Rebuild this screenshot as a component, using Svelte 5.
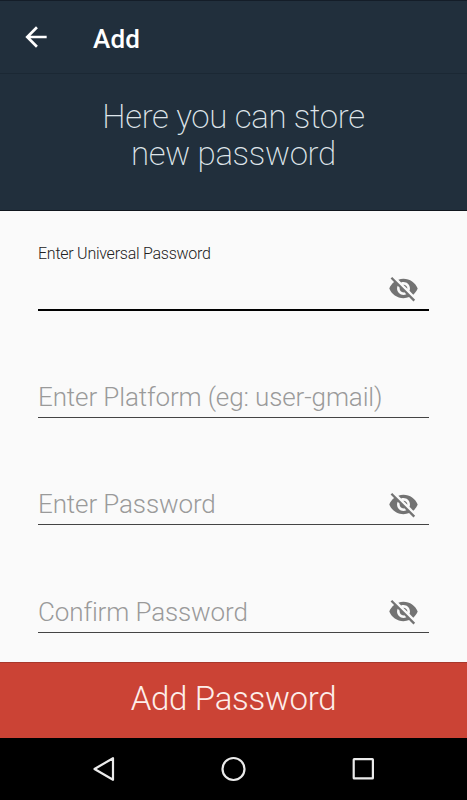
<script lang="ts">
  interface Field {
    id: string;
    label: string;
    type: "text" | "password";
    focused?: boolean;
  }

  const fields: Field[] = [
    {
      id: "universal",
      label: "Enter Universal Password",
      type: "password",
      focused: true,
    },
    { id: "platform", label: "Enter Platform (eg: user-gmail)", type: "text" },
    { id: "password", label: "Enter Password", type: "password" },
    { id: "confirm", label: "Confirm Password", type: "password" },
  ];

  let values = $state<Record<string, string>>({});
  let visible = $state<Record<string, boolean>>({});

  function toggleVisible(id: string) {
    visible[id] = !visible[id];
  }
</script>

<div class="screen">
  <header class="app-bar">
    <button class="back-btn" aria-label="Back">
      <svg width="32" height="32" viewBox="0 0 24 24" aria-hidden="true">
        <path
          fill="currentColor"
          d="M20 11H7.83l5.59-5.59L12 4l-8 8 8 8 1.41-1.41L7.83 13H20v-2z"
        />
      </svg>
    </button>
    <h1 class="title">Add</h1>
  </header>

  <section class="banner">
    <p class="banner-text">Here you can store<br />new password</p>
  </section>

  <form class="form">
    {#each fields as field (field.id)}
      <div class="field" class:focused={field.focused}>
        {#if field.focused}
          <label class="field-label" for={field.id}>{field.label}</label>
        {/if}
        <div class="field-row">
          <input
            id={field.id}
            class="field-input"
            type={field.type === "password" && !visible[field.id]
              ? "password"
              : "text"}
            placeholder={field.focused ? "" : field.label}
            aria-label={field.label}
            autocomplete="off"
            bind:value={values[field.id]}
          />
          {#if field.type === "password"}
            <button
              type="button"
              class="eye-btn"
              aria-label="Toggle password visibility"
              onclick={() => toggleVisible(field.id)}
            >
              <svg width="31" height="31" viewBox="0 0 24 24" aria-hidden="true">
                <path
                  fill="currentColor"
                  d="M12 7c2.76 0 5 2.24 5 5 0 .65-.13 1.26-.36 1.83l2.92 2.92c1.51-1.26 2.7-2.89 3.43-4.75-1.73-4.39-6-7.5-11-7.5-1.4 0-2.74.25-3.98.7l2.16 2.16C10.74 7.13 11.35 7 12 7zM2 4.27l2.28 2.28.46.46C3.08 8.3 1.78 10.02 1 12c1.73 4.39 6 7.5 11 7.5 1.55 0 3.03-.3 4.38-.84l.42.42L19.73 22 21 20.73 3.27 3 2 4.27zM7.53 9.8l1.55 1.55c-.05.21-.08.43-.08.65 0 1.66 1.34 3 3 3 .22 0 .44-.03.65-.08l1.55 1.55c-.67.33-1.41.53-2.2.53-2.76 0-5-2.24-5-5 0-.79.2-1.53.53-2.2zm4.31-.78l3.15 3.15.02-.16c0-1.66-1.34-3-3-3l-.17.01z"
                />
              </svg>
            </button>
          {/if}
        </div>
      </div>
    {/each}
  </form>

  <button class="submit-btn">Add Password</button>

  <nav class="nav-bar" aria-label="System navigation">
    <svg width="28" height="28" viewBox="0 0 28 28" aria-hidden="true">
      <path d="M4.5 14L23 3.2V24.8Z" />
    </svg>
    <svg width="28" height="28" viewBox="0 0 28 28" aria-hidden="true">
      <circle cx="13.5" cy="14" r="11" />
    </svg>
    <svg width="28" height="28" viewBox="0 0 28 28" aria-hidden="true">
      <rect x="3.7" y="4.2" width="19.2" height="19.2" rx="0.5" />
    </svg>
  </nav>
</div>

<style>
  :global(body) {
    margin: 0;
  }

  .screen {
    display: flex;
    flex-direction: column;
    box-sizing: border-box;
    height: 800px;
    overflow: hidden;
    border-top: 1px solid #141d28;
    background: #fafafa;
    font-family: Roboto, "Noto Sans", sans-serif;
  }

  button {
    padding: 0;
    border: none;
    background: none;
    font-family: inherit;
    cursor: pointer;
  }

  .app-bar {
    display: flex;
    align-items: center;
    flex-shrink: 0;
    box-sizing: border-box;
    height: 73px;
    padding: 0 20px;
    background: #212f3c;
    border-bottom: 1px solid #1b2834;
  }

  .back-btn {
    display: flex;
    color: #fff;
  }

  .title {
    margin: 3px 0 0 41px;
    font-size: 26px;
    font-weight: 500;
    line-height: 1;
    letter-spacing: 0.2px;
    color: #fff;
  }

  .banner {
    flex-shrink: 0;
    box-sizing: border-box;
    height: 137px;
    padding-top: 24px;
    background: #212f3c;
    border-bottom: 1px solid #10161d;
  }

  .banner-text {
    margin: 0;
    font-size: 33px;
    font-weight: 200;
    line-height: 37px;
    letter-spacing: -0.33px;
    text-align: center;
    color: #dfe5ea;
  }

  .form {
    display: flex;
    flex-direction: column;
    flex: 1;
    padding: 32px 38px 0;
  }

  .field {
    display: flex;
    flex-direction: column;
    justify-content: flex-end;
    box-sizing: border-box;
    height: 107.5px;
    border-bottom: 1px solid #444;
  }

  .field.focused {
    height: 68px;
    margin-bottom: -0.6px;
    justify-content: space-between;
    border-bottom: 2px solid #000;
  }

  .field-label {
    font-size: 16px;
    font-weight: 300;
    line-height: 21px;
    letter-spacing: -0.25px;
    color: #212121;
  }

  .field-row {
    display: flex;
    align-items: center;
    height: 40px;
  }

  .focused .field-row {
    height: 42px;
  }

  .field-input {
    flex: 1;
    min-width: 0;
    height: 40px;
    padding: 0;
    border: none;
    outline: none;
    background: transparent;
    font-family: inherit;
    font-size: 26px;
    font-weight: 300;
    letter-spacing: -0.12px;
    color: #212121;
  }

  .field-input::placeholder {
    color: #9a9a9a;
    opacity: 1;
  }

  .eye-btn {
    display: flex;
    margin-right: 10px;
    color: #737373;
  }

  .submit-btn {
    flex-shrink: 0;
    height: 76px;
    padding-bottom: 5px;
    border-top: 1px solid #a8382c;
    background: #cb4335;
    font-size: 33px;
    font-weight: 300;
    letter-spacing: -0.3px;
    color: #fdeeea;
  }

  .nav-bar {
    display: flex;
    align-items: center;
    justify-content: center;
    gap: 102px;
    flex-shrink: 0;
    height: 62px;
    background: #000;
  }

  .nav-bar svg {
    fill: none;
    stroke: #ebebeb;
    stroke-width: 2.2;
    stroke-linejoin: round;
  }
</style>
